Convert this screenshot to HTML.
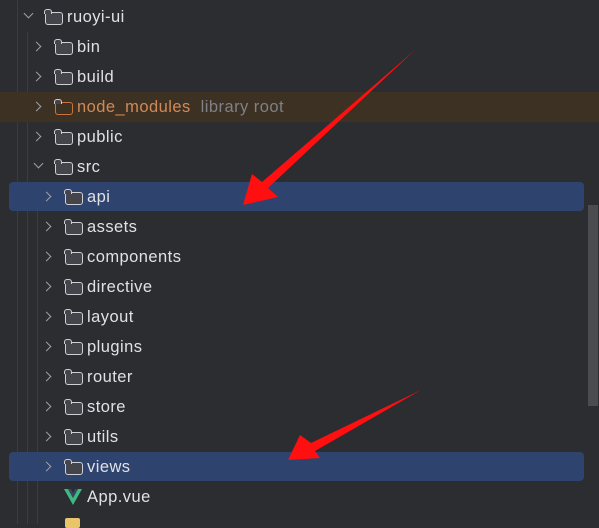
<!DOCTYPE html><html><head><style>
body{margin:0;width:599px;height:524px;background:#2b2d30;overflow:hidden;position:relative;font-family:"Liberation Sans",sans-serif;font-size:16.5px;letter-spacing:0.45px;color:#dfe1e5}
.row{position:absolute;left:0;width:599px;height:30px}
.t{position:absolute;top:6px}
.ch{position:absolute;top:11px;width:6px;height:6px;border-right:1.3px solid #9da0a8;border-bottom:1.3px solid #9da0a8;transform:rotate(-45deg)}
.ch.d{transform:rotate(45deg);top:8px}
.f{position:absolute;top:10px;width:18px;height:13px;border:1.6px solid #ced0d6;border-radius:3px;background:#43454a;box-sizing:border-box}
.f:before{content:"";position:absolute;left:-1.6px;top:-4px;width:8px;height:5px;border:1.6px solid #ced0d6;border-bottom:none;border-radius:3px 3px 0 0;box-sizing:border-box;background:#43454a}
.g{position:absolute;top:0;width:1px;background:#3a3c40}
.sel{position:absolute;left:9px;width:575px;height:29px;background:#2e436e;border-radius:4px}
</style></head><body>
<div class="g" style="left:17px;height:524px"></div>
<div class="g" style="left:27px;top:32px;height:492px"></div>
<div class="g" style="left:37px;top:182px;height:342px"></div>
<div style="position:absolute;left:0;top:92px;width:599px;height:30px;background:#3d3124"></div>
<div class="sel" style="top:182px"></div>
<div class="sel" style="top:452px"></div>
<div style="position:absolute;left:588px;top:205px;width:10px;height:201px;background:#4a4c50"></div>

<div class="row" style="top:2px"><div class="ch d" style="left:25px"></div><div class="f" style="left:45px"></div><span class="t" style="left:67px">ruoyi-ui</span></div>
<div class="row" style="top:32px"><div class="ch" style="left:33px"></div><div class="f" style="left:55px"></div><span class="t" style="left:77px">bin</span></div>
<div class="row" style="top:62px"><div class="ch" style="left:33px"></div><div class="f" style="left:55px"></div><span class="t" style="left:77px">build</span></div>
<div class="row" style="top:92px"><div class="ch" style="left:33px"></div><div class="f" style="left:55px;border-color:#c7753f;background:transparent"></div><span class="t" style="left:77px;color:#d08a57">node_modules<span style="color:#7e8187;margin-left:10px">library root</span></span></div>
<div class="row" style="top:122px"><div class="ch" style="left:33px"></div><div class="f" style="left:55px"></div><span class="t" style="left:77px">public</span></div>
<div class="row" style="top:152px"><div class="ch d" style="left:35px"></div><div class="f" style="left:55px"></div><span class="t" style="left:77px">src</span></div>
<div class="row" style="top:182px"><div class="ch" style="left:43px"></div><div class="f" style="left:65px"></div><span class="t" style="left:87px">api</span></div>
<div class="row" style="top:212px"><div class="ch" style="left:43px"></div><div class="f" style="left:65px"></div><span class="t" style="left:87px">assets</span></div>
<div class="row" style="top:242px"><div class="ch" style="left:43px"></div><div class="f" style="left:65px"></div><span class="t" style="left:87px">components</span></div>
<div class="row" style="top:272px"><div class="ch" style="left:43px"></div><div class="f" style="left:65px"></div><span class="t" style="left:87px">directive</span></div>
<div class="row" style="top:302px"><div class="ch" style="left:43px"></div><div class="f" style="left:65px"></div><span class="t" style="left:87px">layout</span></div>
<div class="row" style="top:332px"><div class="ch" style="left:43px"></div><div class="f" style="left:65px"></div><span class="t" style="left:87px">plugins</span></div>
<div class="row" style="top:362px"><div class="ch" style="left:43px"></div><div class="f" style="left:65px"></div><span class="t" style="left:87px">router</span></div>
<div class="row" style="top:392px"><div class="ch" style="left:43px"></div><div class="f" style="left:65px"></div><span class="t" style="left:87px">store</span></div>
<div class="row" style="top:422px"><div class="ch" style="left:43px"></div><div class="f" style="left:65px"></div><span class="t" style="left:87px">utils</span></div>
<div class="row" style="top:452px"><div class="ch" style="left:43px"></div><div class="f" style="left:65px"></div><span class="t" style="left:87px">views</span></div>
<div class="row" style="top:482px"><svg style="position:absolute;left:64px;top:7px" width="18" height="16" viewBox="0 0 18 16"><path d="M0 0h4l5 9 5-9h4L9 16z" fill="#41b883"/><path d="M4 0h3l2 4 2-4h3L9 9z" fill="#35495e"/></svg><span class="t" style="left:87px">App.vue</span></div>
<div style="position:absolute;left:65px;top:518px;width:15px;height:10px;background:#e8c46a;border-radius:2px"></div>

<svg style="position:absolute;left:0;top:0" width="599" height="524">
<polygon points="243,205 252,174 262,182 415,50 268,188 278,197" fill="#ff0f0f"/>
<polygon points="288,460 300,435 311,443 421,390 315,451 320,458" fill="#ff0f0f"/>
</svg>
</body></html>
